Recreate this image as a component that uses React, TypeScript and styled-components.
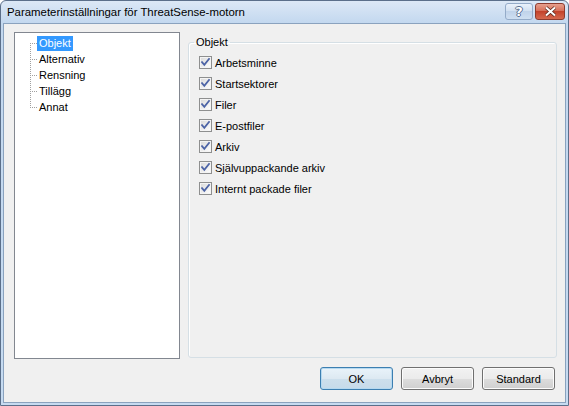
import React from "react";
import styled, { createGlobalStyle } from "styled-components";

const GlobalStyle = createGlobalStyle`
  html, body {
    margin: 0;
    padding: 0;
    background: #ffffff;
  }
  body {
    font-family: "Liberation Sans", Arial, sans-serif;
    font-size: 11px;
    color: #000;
  }
`;

const treeItems = ["Objekt", "Alternativ", "Rensning", "Tillägg", "Annat"];

const objectItems = [
  "Arbetsminne",
  "Startsektorer",
  "Filer",
  "E-postfiler",
  "Arkiv",
  "Självuppackande arkiv",
  "Internt packade filer",
];

const CheckMark = () => (
  <svg width="13" height="13" viewBox="0 0 13 13">
    <path
      d="M3 6.2 L5.3 8.8 L10 3"
      fill="none"
      stroke="#4d64a6"
      strokeWidth="1.8"
      strokeLinecap="square"
    />
  </svg>
);

const CloseGlyph = () => (
  <svg width="13" height="11" viewBox="0 0 13 11">
    <path d="M2 1.5 L11 9.5 M11 1.5 L2 9.5" stroke="#5a2a20" strokeWidth="3.6" />
    <path d="M2 1.5 L11 9.5 M11 1.5 L2 9.5" stroke="#ffffff" strokeWidth="2" />
  </svg>
);

export default function App() {
  return (
    <>
      <GlobalStyle />
      <Window>
        <TitleBar>
          <Title>Parameterinställningar för ThreatSense-motorn</Title>
          <CaptionButtons>
            <HelpButton>?</HelpButton>
            <CloseButton>
              <CloseGlyph />
            </CloseButton>
          </CaptionButtons>
        </TitleBar>

        <Client>
          <Body>
            <TreePanel>
              <TreeList>
                {treeItems.map((item, i) => (
                  <TreeItem key={item} $first={i === 0} $last={i === treeItems.length - 1}>
                    <TreeLabel $selected={i === 0}>{item}</TreeLabel>
                  </TreeItem>
                ))}
              </TreeList>
            </TreePanel>

            <GroupBox>
              <GroupLegend>Objekt</GroupLegend>
              <CheckList>
                {objectItems.map((item) => (
                  <CheckRow key={item}>
                    <CheckBox>
                      <CheckMark />
                    </CheckBox>
                    {item}
                  </CheckRow>
                ))}
              </CheckList>
            </GroupBox>
          </Body>

          <Footer>
            <DialogButton $default>OK</DialogButton>
            <DialogButton>Avbryt</DialogButton>
            <DialogButton>Standard</DialogButton>
          </Footer>
        </Client>
      </Window>
    </>
  );
}

const Window = styled.div`
  width: 569px;
  height: 406px;
  box-sizing: border-box;
  display: flex;
  flex-direction: column;
  border: 1px solid #5b6f8a;
  border-radius: 6px 6px 0 0;
  background: linear-gradient(#dce8f6, #c3d8ef 22px, #c6dbf1);
  overflow: hidden;
`;

const TitleBar = styled.div`
  height: 22px;
  display: flex;
  align-items: flex-start;
  padding: 0 3px 0 6px;
`;

const Title = styled.div`
  flex: 1;
  font-size: 11.4px;
  line-height: 22px;
  color: #000;
  white-space: nowrap;
`;

const CaptionButtons = styled.div`
  display: flex;
  gap: 2px;
  margin-top: 2px;
`;

const CaptionButton = styled.div`
  height: 17px;
  box-sizing: border-box;
  border-radius: 3px;
  display: flex;
  align-items: center;
  justify-content: center;
`;

const HelpButton = styled(CaptionButton)`
  width: 28px;
  border: 1px solid #94abc8;
  background: linear-gradient(#eaf2fb, #d3e1f1 45%, #c0d3ea 50%, #cfdff1);
  color: #ffffff;
  font-family: "DejaVu Sans", sans-serif;
  font-weight: bold;
  font-size: 13px;
  text-shadow: -1px 0 #5a7092, 1px 0 #5a7092, 0 -1px #5a7092, 0 1px #5a7092;
`;

const CloseButton = styled(CaptionButton)`
  width: 30px;
  border: 1px solid #8d3b2e;
  background: linear-gradient(#e7a08e, #d7705a 45%, #c3432c 50%, #d6694f);
`;

const Client = styled.div`
  flex: 1;
  margin: 0 2px 3px 2px;
  border: 1px solid #8aa2be;
  background: #f0f0f0;
  display: flex;
  flex-direction: column;
  padding: 8px 8px 12px 10px;
`;

const Body = styled.div`
  height: 327px;
  display: flex;
  gap: 8px;
`;

const TreePanel = styled.div`
  width: 166px;
  box-sizing: border-box;
  border: 1px solid #828790;
  background: #ffffff;
  padding: 2px 0 0 15px;
`;

const TreeList = styled.ul`
  list-style: none;
  margin: 0;
  padding: 0;
`;

const TreeItem = styled.li<{ $first?: boolean; $last?: boolean }>`
  position: relative;
  height: 16px;
  padding-left: 7px;
  display: flex;
  align-items: center;

  &::before {
    content: "";
    position: absolute;
    left: 0;
    width: 1px;
    top: ${(p) => (p.$first ? "8px" : "0")};
    bottom: ${(p) => (p.$last ? "8px" : "0")};
    background: repeating-linear-gradient(to bottom, #a0a0a0 0 1px, transparent 1px 2px);
  }

  &::after {
    content: "";
    position: absolute;
    left: 0;
    top: 8px;
    width: 7px;
    height: 1px;
    background: repeating-linear-gradient(to right, #a0a0a0 0 1px, transparent 1px 2px);
  }
`;

const TreeLabel = styled.span<{ $selected?: boolean }>`
  line-height: 15px;
  padding: 0 2px;
  background: ${(p) => (p.$selected ? "#3399ff" : "transparent")};
  color: ${(p) => (p.$selected ? "#ffffff" : "#000000")};
`;

const GroupBox = styled.fieldset`
  flex: 1;
  margin: 4px 0 1px 0;
  padding: 3px 0 0 10px;
  min-width: 0;
  border: 1px solid #d5dfe5;
  border-radius: 3px;
  box-shadow: inset 1px 1px 0 #ffffff;
`;

const GroupLegend = styled.legend`
  margin-left: -5px;
  padding: 0 2px;
  line-height: 13px;
`;

const CheckList = styled.div`
  display: flex;
  flex-direction: column;
`;

const CheckRow = styled.label`
  height: 21px;
  display: flex;
  align-items: center;
  gap: 3px;
`;

const CheckBox = styled.span`
  width: 13px;
  height: 13px;
  box-sizing: border-box;
  border: 1px solid #8e8f8f;
  background: linear-gradient(135deg, #d8d8d8, #f4f4f4 70%, #ffffff);
  box-shadow: inset 0 0 0 1px #f4f4f4;
  display: flex;
  align-items: center;
  justify-content: center;

  svg {
    margin: -1px;
  }
`;

const Footer = styled.div`
  margin-top: 8px;
  padding-right: 2px;
  display: flex;
  justify-content: flex-end;
  gap: 8px;
`;

const DialogButton = styled.button<{ $default?: boolean }>`
  width: 73px;
  height: 23px;
  box-sizing: border-box;
  font-family: "Liberation Sans", Arial, sans-serif;
  font-size: 11px;
  color: #000;
  border-radius: 3px;
  border: 1px solid ${(p) => (p.$default ? "#3c7fb1" : "#707070")};
  background: ${(p) =>
    p.$default
      ? "linear-gradient(#e9f3fa, #dde9f2 50%, #cddfec 51%, #c6dbea)"
      : "linear-gradient(#f2f2f2, #ebebeb 50%, #dddddd 51%, #cfcfcf)"};
  box-shadow: inset 0 0 0 1px ${(p) => (p.$default ? "#b6d9f0" : "#fcfcfc")};
  padding: 0;
`;
